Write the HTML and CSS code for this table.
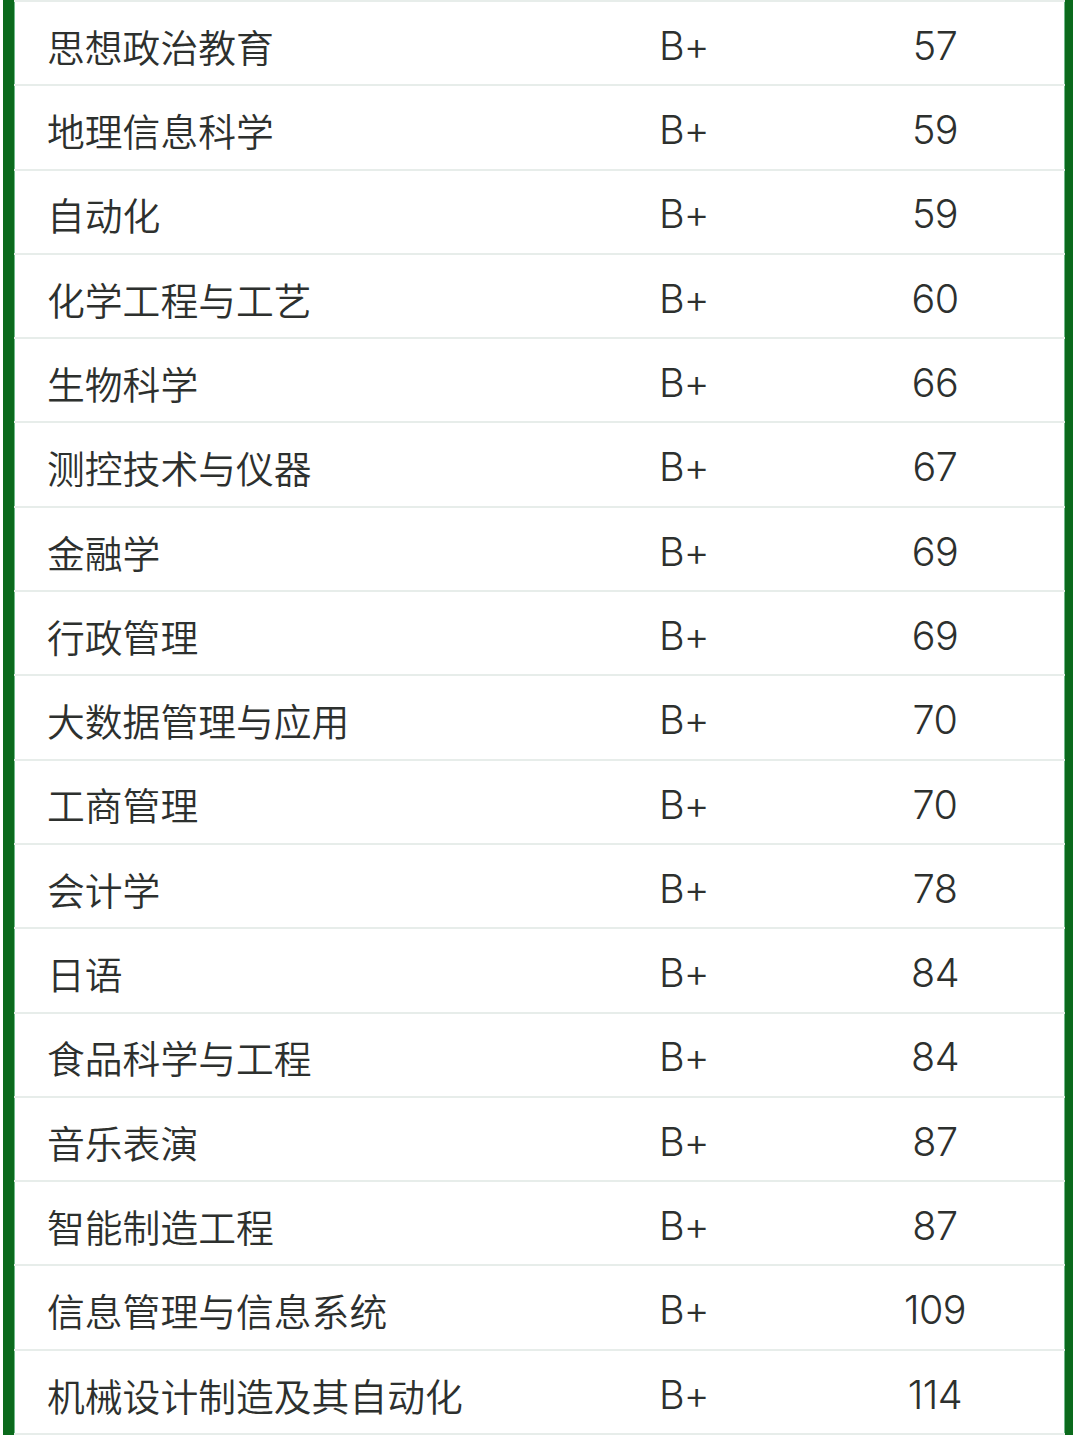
FILE: index.html
```html
<!DOCTYPE html>
<html lang="zh-CN">
<head>
<meta charset="utf-8">
<link rel="stylesheet" href="styles.css">
</head>
<body>
<div class="frame">
  <div class="table">
    <div class="row"><span class="name">思想政治教育</span><span class="grade">B+</span><span class="num">57</span></div>
    <div class="row"><span class="name">地理信息科学</span><span class="grade">B+</span><span class="num">59</span></div>
    <div class="row"><span class="name">自动化</span><span class="grade">B+</span><span class="num">59</span></div>
    <div class="row"><span class="name">化学工程与工艺</span><span class="grade">B+</span><span class="num">60</span></div>
    <div class="row"><span class="name">生物科学</span><span class="grade">B+</span><span class="num">66</span></div>
    <div class="row"><span class="name">测控技术与仪器</span><span class="grade">B+</span><span class="num">67</span></div>
    <div class="row"><span class="name">金融学</span><span class="grade">B+</span><span class="num">69</span></div>
    <div class="row"><span class="name">行政管理</span><span class="grade">B+</span><span class="num">69</span></div>
    <div class="row"><span class="name">大数据管理与应用</span><span class="grade">B+</span><span class="num">70</span></div>
    <div class="row"><span class="name">工商管理</span><span class="grade">B+</span><span class="num">70</span></div>
    <div class="row"><span class="name">会计学</span><span class="grade">B+</span><span class="num">78</span></div>
    <div class="row"><span class="name">日语</span><span class="grade">B+</span><span class="num">84</span></div>
    <div class="row"><span class="name">食品科学与工程</span><span class="grade">B+</span><span class="num">84</span></div>
    <div class="row"><span class="name">音乐表演</span><span class="grade">B+</span><span class="num">87</span></div>
    <div class="row"><span class="name">智能制造工程</span><span class="grade">B+</span><span class="num">87</span></div>
    <div class="row"><span class="name">信息管理与信息系统</span><span class="grade">B+</span><span class="num">109</span></div>
    <div class="row"><span class="name">机械设计制造及其自动化</span><span class="grade">B+</span><span class="num">114</span></div>
  </div>
</div>
</body>
</html>
```

FILE: styles.css
```css
html, body {
  margin: 0;
  padding: 0;
  background: #ffffff;
}

body {
  width: 1080px;
  height: 1443px;
  overflow: hidden;
  font-family: "Noto Sans CJK SC", "Noto Sans", sans-serif;
  color: #2d302e;
}

.frame {
  margin: 0 7px 0 3px;
  border-left: 11px solid #0b6a1c;
  border-right: 8px solid #0b6a1c;
  box-shadow: inset 1px 0 0 #6fb98a, inset -1px 0 0 #6fb98a;
}

.table {
  border-top: 2px solid #e7edea;
}

.row {
  box-sizing: border-box;
  height: 84.3px;
  border-bottom: 2px solid #e7edea;
  display: grid;
  grid-template-columns: 646px 175px 200px 1fr;
  align-items: center;
  line-height: 1;
  padding-top: 5px;
}

.name {
  padding-left: 33px;
  white-space: nowrap;
  font-size: 37.8px;
  font-weight: 350;
}

.grade,
.num {
  font-family: Inter, Roboto, "Noto Sans", sans-serif;
  font-size: 39.5px;
  font-weight: 300;
  white-space: nowrap;
  padding-top: 2px;
}

.grade {
  margin-left: -1px;
  letter-spacing: -1px;
}

.num {
  text-align: center;
  letter-spacing: -0.5px;
}
```
